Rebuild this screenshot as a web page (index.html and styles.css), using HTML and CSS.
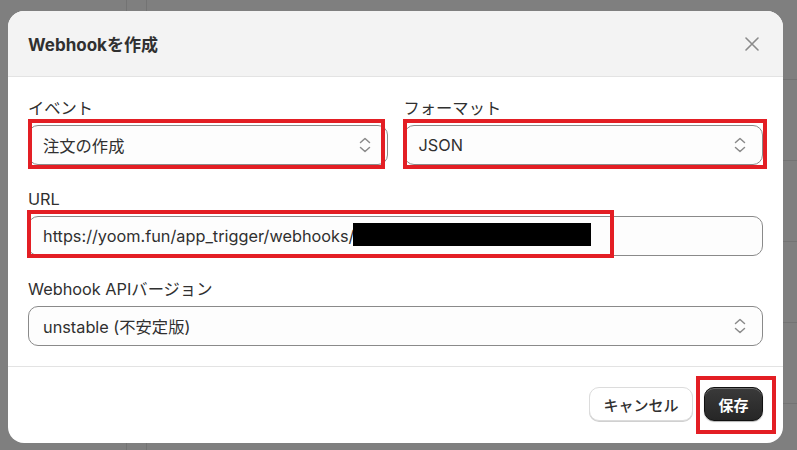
FILE: index.html
```html
<!DOCTYPE html>
<html lang="ja">
<head>
<meta charset="utf-8">
<title>Webhookを作成</title>
<link rel="stylesheet" href="styles.css">
</head>
<body>
<div class="modal">
  <header class="modal-head">
    <h1 class="title">Webhookを作成</h1>
    <button class="close" aria-label="閉じる">
      <svg width="14" height="14" viewBox="0 0 14 14"><path d="M1 1L13 13M13 1L1 13" stroke="#8a8a8a" stroke-width="1.6" stroke-linecap="round" fill="none"/></svg>
    </button>
  </header>
  <div class="modal-body">
    <div class="row-2">
      <div class="field">
        <label class="label">イベント</label>
        <div class="ctl select">
          <span class="value">注文の作成</span>
          <svg class="chev" width="12" height="16" viewBox="0 0 12 16"><path d="M1.5 5.5L6 1.5L10.5 5.5M1.5 10.5L6 14.5L10.5 10.5" stroke="#8a8a8a" stroke-width="1.5" stroke-linecap="round" stroke-linejoin="round" fill="none"/></svg>
          <span class="mark mark-a"></span>
        </div>
      </div>
      <div class="field">
        <label class="label">フォーマット</label>
        <div class="ctl select">
          <span class="value">JSON</span>
          <svg class="chev" width="12" height="16" viewBox="0 0 12 16"><path d="M1.5 5.5L6 1.5L10.5 5.5M1.5 10.5L6 14.5L10.5 10.5" stroke="#8a8a8a" stroke-width="1.5" stroke-linecap="round" stroke-linejoin="round" fill="none"/></svg>
          <span class="mark mark-b"></span>
        </div>
      </div>
    </div>
    <div class="field">
      <label class="label">URL</label>
      <div class="ctl input">
        <span class="value">https://yoom.fun/app_trigger/webhooks/</span>
        <span class="redact"></span>
        <span class="mark mark-c"></span>
      </div>
    </div>
    <div class="field">
      <label class="label">Webhook APIバージョン</label>
      <div class="ctl select">
        <span class="value">unstable (不安定版)</span>
        <svg class="chev" width="12" height="16" viewBox="0 0 12 16"><path d="M1.5 5.5L6 1.5L10.5 5.5M1.5 10.5L6 14.5L10.5 10.5" stroke="#8a8a8a" stroke-width="1.5" stroke-linecap="round" stroke-linejoin="round" fill="none"/></svg>
      </div>
    </div>
  </div>
  <footer class="modal-foot">
    <button class="btn btn-secondary">キャンセル</button>
    <div class="btn-wrap">
      <button class="btn btn-primary">保存</button>
      <span class="mark mark-d"></span>
    </div>
  </footer>
</div>
</body>
</html>
```
FILE: styles.css
```css
* { box-sizing: border-box; }
html, body { margin: 0; }
body {
  width: 797px;
  height: 450px;
  overflow: hidden;
  padding: 11px 14px 7px 8px;
  font-family: Inter, "Noto Sans CJK JP", sans-serif;
  color: #303030;
  background-color: #7f7f7f;
  background-image:
    linear-gradient(#737373, #737373),
    linear-gradient(#737373, #737373),
    linear-gradient(#737373, #737373),
    linear-gradient(#737373, #737373),
    linear-gradient(#737373, #737373),
    linear-gradient(#737373, #737373),
    linear-gradient(#737373, #737373);
  background-repeat: no-repeat;
  background-size: 1px 450px, 1px 450px, 14px 1px, 14px 1px, 14px 1px, 14px 1px, 14px 1px;
  background-position: 126px 0, 146px 0, 783px 79px, 783px 160px, 783px 241px, 783px 322px, 783px 403px;
}
.modal {
  width: 775px;
  height: 432px;
  background: #fff;
  border-radius: 16px;
  overflow: hidden;
  display: flex;
  flex-direction: column;
}
.modal-head {
  height: 66px;
  flex: none;
  background: #f3f3f3;
  border-bottom: 1px solid #e3e3e3;
  display: flex;
  align-items: center;
  justify-content: space-between;
  padding: 0 24px 0 20px;
}
.title {
  margin: 0;
  font-size: 17px;
  font-weight: 700;
  color: #303030;
}
.close {
  border: 0;
  background: none;
  padding: 0;
  width: 14px;
  height: 14px;
  display: flex;
}
.modal-body {
  padding: 21px 20px 20px;
  display: flex;
  flex-direction: column;
  gap: 23.5px;
}
.row-2 {
  display: grid;
  grid-template-columns: 1fr 1fr;
  column-gap: 16px;
}
.field {
  display: flex;
  flex-direction: column;
}
.label {
  font-size: 16.3px;
  line-height: 20px;
  margin-bottom: 7px;
  color: #303030;
}
.ctl {
  position: relative;
  height: 40px;
  border: 1px solid #8a8a8a;
  border-radius: 10px;
  background: #fdfdfd;
  display: flex;
  align-items: center;
  padding: 0 16px 0 14px;
  font-size: 16.3px;
  color: #303030;
}
.select { justify-content: space-between; }
.value { white-space: nowrap; }
.chev { flex: none; }
.redact {
  position: absolute;
  left: 324px;
  top: 6px;
  width: 238px;
  height: 23px;
  background: #000;
}
.mark {
  position: absolute;
  border: 4px solid #e31e24;
  pointer-events: none;
}
.mark-a { left: -1px; right: 2px; top: -7px; bottom: -5px; }
.mark-b { left: -2px; right: -5px; top: -7px; bottom: -5px; }
.mark-c { left: -2px; right: 148px; top: -7px; bottom: -3px; }
.mark-d { left: -8px; right: -13px; top: -11px; bottom: -13px; }
.modal-foot {
  flex: 1;
  border-top: 1px solid #e3e3e3;
  display: flex;
  justify-content: flex-end;
  align-items: flex-start;
  gap: 11px;
  padding: 20px 20px 0;
}
.btn {
  height: 34px;
  border-radius: 10px;
  font-family: Inter, "Noto Sans CJK JP", sans-serif;
  font-size: 15px;
  padding: 0;
  white-space: nowrap;
  cursor: pointer;
}
.btn-secondary {
  width: 104px;
  background: #fff;
  color: #303030;
  font-weight: 500;
  border: 1px solid #dcdcdc;
  box-shadow: 0 1px 0 #d0d0d0;
}
.btn-wrap {
  position: relative;
  display: flex;
}
.btn-primary {
  width: 59px;
  background: linear-gradient(#3a3a3a, #262626);
  color: #fff;
  font-weight: 700;
  border: 1px solid #111;
  box-shadow: inset 0 1px 0 rgba(255,255,255,0.25), 0 1px 1px rgba(0,0,0,0.3);
}
```
